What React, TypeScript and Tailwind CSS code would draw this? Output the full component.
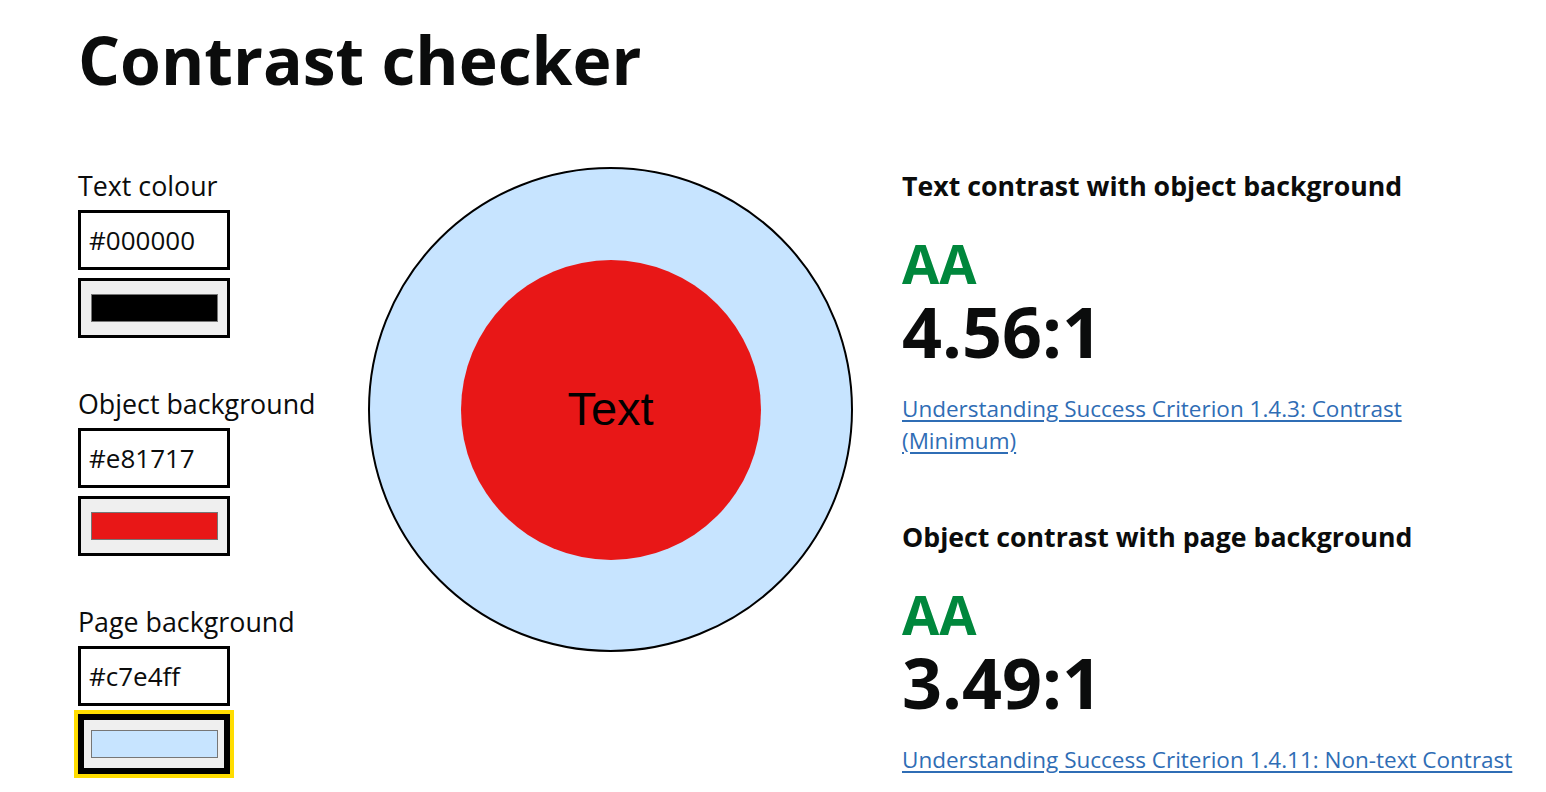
import { useState } from 'react'

type Field = {
  id: string
  label: string
  value: string
}

const fields: Field[] = [
  { id: 'text', label: 'Text colour', value: '#000000' },
  { id: 'object', label: 'Object background', value: '#e81717' },
  { id: 'page', label: 'Page background', value: '#c7e4ff' },
]

type Result = {
  title: string
  level: string
  ratio: string
  link: string
}

const results: Result[] = [
  {
    title: 'Text contrast with object background',
    level: 'AA',
    ratio: '4.56:1',
    link: 'Understanding Success Criterion 1.4.3: Contrast (Minimum)',
  },
  {
    title: 'Object contrast with page background',
    level: 'AA',
    ratio: '3.49:1',
    link: 'Understanding Success Criterion 1.4.11: Non-text Contrast',
  },
]

function ColourField({ field, focused }: { field: Field; focused: boolean }) {
  return (
    <div className="flex flex-col">
      <label htmlFor={field.id} className="text-[26.8px] leading-[36px] text-[#0b0c0c]">
        {field.label}
      </label>
      <input
        id={field.id}
        defaultValue={field.value}
        className="mt-[6px] h-[60px] w-[152px] border-[3px] border-black bg-white px-[8px] text-[26px] text-[#0b0c0c] outline-none"
      />
      <button
        className={
          'mt-[8px] flex h-[60px] w-[152px] items-center justify-center border-[3px] border-black bg-[#efefef] ' +
          (focused ? 'shadow-[inset_0_0_0_3px_#000] outline-[4px] outline-solid outline-[#ffdd00]' : '')
        }
      >
        <span className="block h-[28px] w-[127px] border border-[#767676]" style={{ backgroundColor: field.value }} />
      </button>
    </div>
  )
}

export default function App() {
  const [focus] = useState('page')

  return (
    <div className="min-h-screen bg-white pl-[78px] font-['Open_Sans',sans-serif] text-[#0b0c0c]">
      <h1 className="pt-[14px] text-[66px] font-bold leading-[90px]">Contrast checker</h1>

      <div className="mt-[64px] flex">
        <div className="flex w-[290px] flex-col gap-[48px]">
          {fields.map((f) => (
            <ColourField key={f.id} field={f} focused={focus === f.id} />
          ))}
        </div>

        <div className="mt-[-1px] flex h-[485px] w-[485px] shrink-0 items-center justify-center rounded-full border-2 border-black bg-[#c7e4ff]">
          <div className="flex h-[300px] w-[300px] items-center justify-center rounded-full bg-[#e81717]">
            <span className="font-['Liberation_Sans',Arial,sans-serif] text-[47px] text-black">Text</span>
          </div>
        </div>

        <div className="ml-[49px] flex w-[614px] flex-col gap-[62px]">
          {results.map((r) => (
            <section key={r.title}>
              <h2 className="text-[26.7px] font-bold leading-[36px]">{r.title}</h2>
              <p className="mt-[31px] text-[54px] font-bold leading-[56px] text-[#00873c]">{r.level}</p>
              <p className="text-[70px] font-bold leading-[80px]">{r.ratio}</p>
              <a href="#" className="mt-[22px] block text-[22.5px] leading-[32px] text-[#2f6db5] underline underline-offset-[3px]">
                {r.link}
              </a>
            </section>
          ))}
        </div>
      </div>
    </div>
  )
}
